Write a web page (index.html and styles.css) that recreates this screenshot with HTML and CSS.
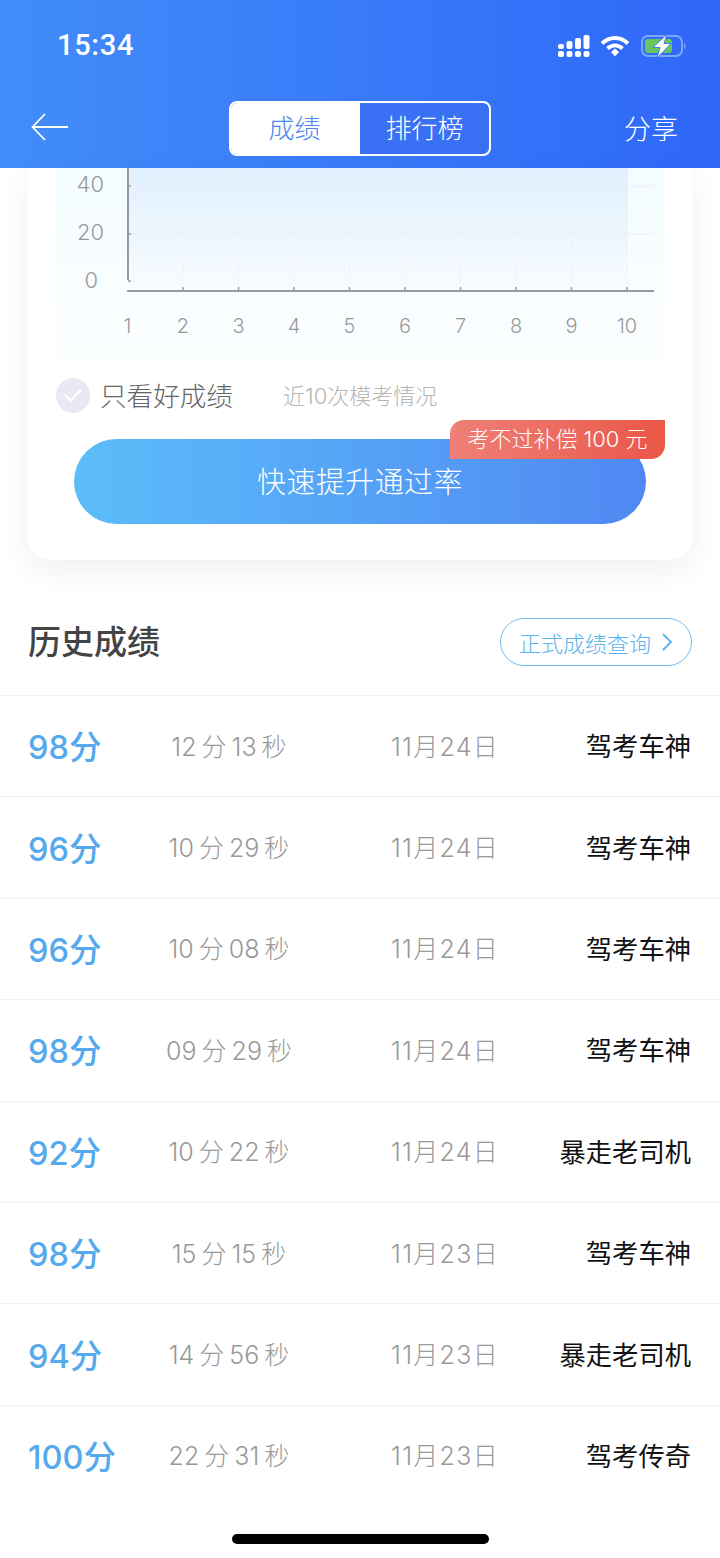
FILE: index.html
```html
<!DOCTYPE html>
<html lang="zh-CN">
<head>
  <meta charset="UTF-8">
  <meta name="viewport" content="width=device-width, initial-scale=1">
  <title>成绩</title>
  <link rel="stylesheet" href="styles.css">
</head>
<body>
<div class="page">
  <header class="header">
    <div class="status">
      <span class="time">15:34</span>
      <div class="status-icons">
        <svg class="i-signal" width="32" height="22" viewBox="0 0 32 22" fill="#fff">
          <rect x="0" y="9" width="6" height="5" rx="2"/><rect x="0" y="16" width="6" height="6" rx="2"/>
          <rect x="8.500" y="6" width="6" height="8" rx="2"/><rect x="8.500" y="16" width="6" height="6" rx="2"/>
          <rect x="17" y="3" width="6" height="11" rx="2"/><rect x="17" y="16" width="6" height="6" rx="2"/>
          <rect x="25.500" y="0" width="6" height="14" rx="2"/><rect x="25.500" y="16" width="6" height="6" rx="2"/>
        </svg>
        <svg class="i-wifi" width="30" height="22" viewBox="0 0 30 22" fill="none" stroke="#fff" stroke-width="4">
          <path d="M2 8.500C9.500 1 20.500 1 28 8.500"/>
          <path d="M7.500 13.500C12 9.500 18 9.500 22.500 13.500"/>
          <path d="M11 17l4-3.500 4 3.500-4 4.500z" fill="#fff" stroke="none"/>
        </svg>
        <svg class="i-battery" width="46" height="24" viewBox="0 0 46 24">
          <rect x="2" y="2" width="40" height="20" rx="6" fill="none" stroke="#7ba6fb" stroke-width="2"/>
          <rect x="5" y="5" width="27" height="14" rx="3" fill="#67c75c"/>
          <path d="M44 9c2 .5 2 5.500 0 6z" fill="#7ba6fb"/>
          <path d="M27 0L13 13.500h7L17 24l14-14.500h-7z" fill="#fff" stroke="#3f78f5" stroke-width="1"/>
        </svg>
      </div>
    </div>
    <nav class="nav">
      <svg class="back" width="38" height="28" viewBox="0 0 38 28" fill="none" stroke="#fff" stroke-width="1.800">
        <path d="M14 1L1.500 14 14 27M1.500 14H37"/>
      </svg>
      <div class="tabs">
        <span class="tab tab-on">成绩</span>
        <span class="tab">排行榜</span>
      </div>
      <span class="share">分享</span>
    </nav>
  </header>

  <section class="card">
    <svg class="chart" width="608" height="192" viewBox="0 0 608 192">
      <defs>
        <linearGradient id="bg" x1="0" y1="0" x2="0" y2="1">
          <stop offset="0" stop-color="#f4fcff"/>
          <stop offset="1" stop-color="#fbfeff"/>
        </linearGradient>
        <linearGradient id="area" x1="0" y1="0" x2="0" y2="1">
          <stop offset="0" stop-color="#e0f0fe"/>
          <stop offset="1" stop-color="#f8fcff"/>
        </linearGradient>
      </defs>
      <rect width="608" height="192" fill="url(#bg)"/>
      <rect x="72" y="0" width="500" height="123" fill="url(#area)"/>
      <g stroke="#eaf0f5" stroke-width="1">
        <path d="M72 18H598M72 66H598"/>
        <path stroke-dasharray="6 6" d="M127 0V123M182.500 0V123M238 0V123M293.500 0V123M349 0V123M404.500 0V123M460 0V123M515.500 0V123M571 0V123"/>
      </g>
      <g stroke="#9a9a9a" fill="none">
        <path stroke-width="2" d="M72 0V112M71 123H598"/>
        <path stroke-width="1.500" d="M72 18h3M72 66h3M72 113h3M127 123v-4M182.500 123v-4M238 123v-4M293.500 123v-4M349 123v-4M404.500 123v-4M460 123v-4M515.500 123v-4M571 123v-4"/>
      </g>
      <g class="axis axis-y">
        <text x="48" y="24">40</text>
        <text x="48" y="72">20</text>
        <text x="42" y="120">0</text>
      </g>
      <g class="axis axis-x">
        <text x="71.500" y="165">1</text><text x="127" y="165">2</text><text x="182.500" y="165">3</text>
        <text x="238" y="165">4</text><text x="293.500" y="165">5</text><text x="349" y="165">6</text>
        <text x="404.500" y="165">7</text><text x="460" y="165">8</text><text x="515.500" y="165">9</text>
        <text x="571" y="165">10</text>
      </g>
    </svg>

    <div class="filter">
      <span class="check">
        <svg width="20" height="16" viewBox="0 0 20 16" fill="none" stroke="#fff" stroke-width="2.200"><path d="M2 8l6 5.500L18 2.500"/></svg>
      </span>
      <span class="filter-label">只看好成绩</span>
      <span class="filter-note">近10次模考情况</span>
    </div>

    <div class="cta-wrap">
      <button class="cta">快速提升通过率</button>
      <span class="badge">考不过补偿 100 元</span>
    </div>
  </section>

  <section class="history">
    <div class="history-head">
      <h2>历史成绩</h2>
      <a class="query">正式成绩查询
        <svg width="12" height="20" viewBox="0 0 12 20" fill="none" stroke="#5ab2ec" stroke-width="1.800"><path d="M2 2l8 8-8 8"/></svg>
      </a>
    </div>
    <ul class="rows">
      <li class="row"><span class="score">98分</span><span class="dur">12 分 13 秒</span><span class="date">11月24日</span><span class="name">驾考车神</span></li>
      <li class="row"><span class="score">96分</span><span class="dur">10 分 29 秒</span><span class="date">11月24日</span><span class="name">驾考车神</span></li>
      <li class="row"><span class="score">96分</span><span class="dur">10 分 08 秒</span><span class="date">11月24日</span><span class="name">驾考车神</span></li>
      <li class="row"><span class="score">98分</span><span class="dur">09 分 29 秒</span><span class="date">11月24日</span><span class="name">驾考车神</span></li>
      <li class="row"><span class="score">92分</span><span class="dur">10 分 22 秒</span><span class="date">11月24日</span><span class="name">暴走老司机</span></li>
      <li class="row"><span class="score">98分</span><span class="dur">15 分 15 秒</span><span class="date">11月23日</span><span class="name">驾考车神</span></li>
      <li class="row"><span class="score">94分</span><span class="dur">14 分 56 秒</span><span class="date">11月23日</span><span class="name">暴走老司机</span></li>
      <li class="row"><span class="score">100分</span><span class="dur">22 分 31 秒</span><span class="date">11月23日</span><span class="name">驾考传奇</span></li>
    </ul>
  </section>

  <div class="home-bar"></div>
</div>
</body>
</html>
```

FILE: styles.css
```css
* {
  box-sizing: border-box;
}

body {
  margin: 0;
  background: #fff;
  font-family: Inter, Roboto, "Noto Sans CJK SC", sans-serif;
}

.page {
  position: relative;
  width: 720px;
  height: 1558px;
  overflow: hidden;
}

.header {
  height: 168px;
  background: linear-gradient(to right, #428df9, #2f67f8);
  color: #fff;
}

.status {
  display: flex;
  justify-content: space-between;
  align-items: center;
  height: 92px;
  padding: 0 34px 0 57px;
}

.time {
  margin-top: -2px;
  font-family: Roboto, sans-serif;
  font-size: 29px;
  font-weight: 500;
  letter-spacing: 0.7px;
}

.status-icons {
  display: flex;
  align-items: center;
  gap: 10px;
}

.nav {
  position: relative;
  display: flex;
  justify-content: center;
  padding-top: 9px;
}

.back {
  position: absolute;
  left: 31px;
  top: 21px;
}

.tabs {
  display: flex;
  width: 262px;
  height: 55px;
  border: 2px solid #fff;
  border-radius: 8px;
  background: #3a70f4;
  overflow: hidden;
}

.tab {
  flex: 1;
  display: flex;
  align-items: center;
  justify-content: center;
  padding-bottom: 5px;
  font-size: 26px;
  font-weight: 300;
}

.tab-on {
  flex: none;
  width: 129px;
  padding-right: 2px;
  background: #fff;
  color: #4a86ec;
}

.share {
  position: absolute;
  right: 42px;
  top: 16px;
  font-size: 27px;
  font-weight: 300;
}

.card {
  width: 664px;
  height: 392px;
  margin: 0 28px;
  padding: 0 28px;
  background: #fff;
  border-radius: 0 0 22px 22px;
  box-shadow: 0 10px 28px rgba(40, 60, 100, 0.08);
}

.chart {
  display: block;
}

.axis text {
  font-family: Inter, sans-serif;
  font-size: 20px;
  font-weight: 300;
  fill: #999;
}

.axis-y text {
  text-anchor: end;
  font-size: 22px;
}

.axis-x text {
  text-anchor: middle;
}

.filter {
  display: flex;
  align-items: center;
  height: 72px;
  padding-bottom: 2px;
}

.check {
  display: flex;
  align-items: center;
  justify-content: center;
  width: 34px;
  height: 35px;
  border-radius: 50%;
  background: #e8e9f3;
}

.filter-label {
  margin-left: 10px;
  padding-bottom: 2px;
  font-size: 26.600px;
  font-weight: 300;
  color: #666;
}

.filter-note {
  margin-left: 50px;
  padding-bottom: 2px;
  font-size: 22px;
  font-weight: 300;
  color: #b5b5b5;
}

.cta-wrap {
  position: relative;
  margin: 7px -10px 0 18px;
  width: 572px;
}

.cta {
  display: block;
  width: 572px;
  height: 85px;
  padding-bottom: 5px;
  border: 0;
  border-radius: 43px;
  background: linear-gradient(to right, #5bbdf9, #5088f3);
  color: #fff;
  font-family: inherit;
  font-size: 29px;
  font-weight: 300;
  letter-spacing: 0.4px;
}

.badge {
  position: absolute;
  top: -19px;
  right: -19px;
  width: 215px;
  height: 39px;
  line-height: 38px;
  text-align: center;
  border-radius: 14px 0 14px 0;
  background: linear-gradient(to right, #ef8078, #ea5748);
  color: #fff;
  font-size: 22px;
  font-weight: 300;
}

.history-head {
  display: flex;
  align-items: center;
  justify-content: space-between;
  height: 135px;
  padding: 28px 28px 0;
}

.history-head h2 {
  margin: 0 0 3px;
  font-size: 33px;
  font-weight: 500;
  color: #444;
}

.query {
  display: flex;
  align-items: center;
  justify-content: center;
  gap: 10px;
  width: 192px;
  height: 48px;
  border: 1px solid #74bdee;
  border-radius: 24px;
  color: #5ab2ec;
  font-size: 22px;
  font-weight: 300;
}

.rows {
  margin: 0;
  padding: 0;
  list-style: none;
}

.row {
  display: grid;
  grid-template-columns: 114px 174px 258px 118px;
  align-items: center;
  height: 101.400px;
  padding: 0 28px 3px;
  border-top: 1px solid #f2f2f2;
}

.score {
  font-size: 32.500px;
  font-weight: 500;
  color: #55a9ec;
  white-space: nowrap;
}

.dur,
.date {
  text-align: center;
  font-size: 25px;
  font-weight: 300;
  color: #999;
  white-space: nowrap;
}

.dur {
  word-spacing: -2px;
}

.date {
  letter-spacing: 1.300px;
}

.name {
  justify-self: end;
  margin-right: 1px;
  font-size: 26.300px;
  font-weight: 400;
  color: #111;
  white-space: nowrap;
}

.home-bar {
  position: absolute;
  left: 232px;
  bottom: 14px;
  width: 257px;
  height: 10px;
  border-radius: 5px;
  background: #000;
}
```
